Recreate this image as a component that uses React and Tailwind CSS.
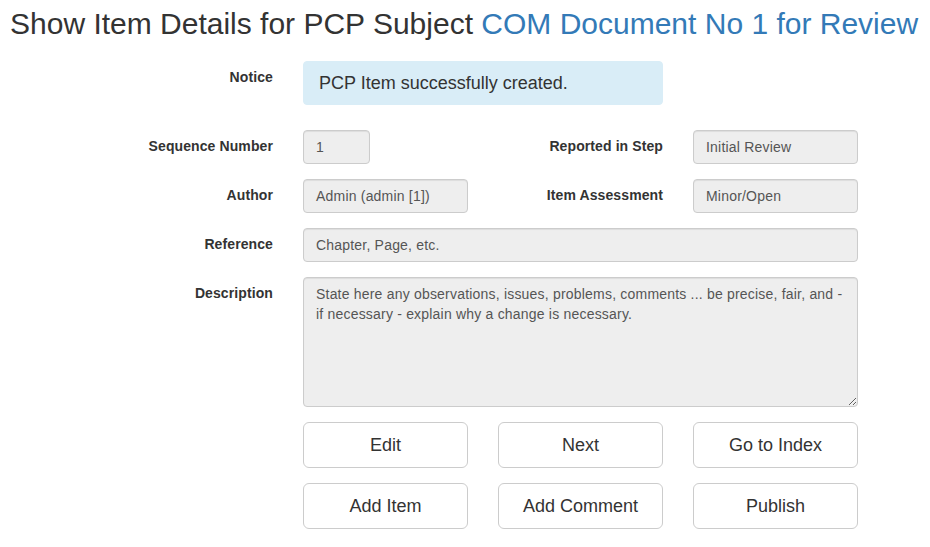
import React from "react";

const font = { fontFamily: '"Liberation Sans", Arial, sans-serif' };

const inputCls =
  "h-[34px] bg-[#eeeeee] border border-[#cccccc] rounded-[4px] px-[12px] text-[14px] leading-[32px] tracking-[0.2px] text-[#555555] shadow-[inset_0_1px_1px_rgba(0,0,0,0.075)] whitespace-nowrap overflow-hidden";

const labelCls = "text-right font-bold text-[14px] leading-[20px] tracking-[0.1px] pt-[6px] text-[#333333]";

const btnCls =
  "h-[46px] bg-white border border-[#cccccc] rounded-[6px] text-[18px] leading-[24px] text-[#333333] flex items-center justify-center";

const Row = ({ label, children, className = "" }) => (
  <div className={"flex " + className}>
    <div className={"w-[273px] shrink-0 " + labelCls}>{label}</div>
    <div className="ml-[30px] w-[555px]">{children}</div>
  </div>
);

const App = () => {
  return (
    <div className="min-h-screen bg-white text-[#333333]" style={font}>
      <h1 className="pt-[7px] pl-[10px] text-[30px] leading-[33px] font-normal whitespace-nowrap">
        Show Item Details for PCP Subject{" "}
        <a className="text-[#337ab7]">COM Document No 1 for Review</a>
      </h1>

      <div className="mt-[21px] flex flex-col">
        {/* Notice */}
        <Row label="Notice">
          <div className="w-[360px] bg-[#d9edf7] border border-[#d9edf7] rounded-[4px] pl-[15px] py-[9px] text-[18px] leading-[24px] text-[#333333]">
            PCP Item successfully created.
          </div>
        </Row>

        {/* Sequence / Reported in Step */}
        <Row label="Sequence Number" className="mt-[25px]">
          <div className="grid grid-cols-3 gap-x-[30px]">
            <div className={inputCls + " w-[67px]"}>1</div>
            <div className={labelCls}>Reported in Step</div>
            <div className={inputCls}>Initial Review</div>
          </div>
        </Row>

        {/* Author / Item Assessment */}
        <Row label="Author" className="mt-[15px]">
          <div className="grid grid-cols-3 gap-x-[30px]">
            <div className={inputCls}>Admin (admin [1])</div>
            <div className={labelCls}>Item Assessment</div>
            <div className={inputCls}>Minor/Open</div>
          </div>
        </Row>

        {/* Reference */}
        <Row label="Reference" className="mt-[15px]">
          <div className={inputCls}>Chapter, Page, etc.</div>
        </Row>

        {/* Description */}
        <Row label="Description" className="mt-[15px]">
          <textarea
            readOnly
            className="block w-full h-[130px] bg-[#eeeeee] border border-[#cccccc] rounded-[4px] px-[12px] py-[6px] text-[14px] leading-[20px] tracking-[0.2px] text-[#555555] shadow-[inset_0_1px_1px_rgba(0,0,0,0.075)] outline-none"
            style={font}
            defaultValue="State here any observations, issues, problems, comments ... be precise, fair, and - if necessary - explain why a change is necessary."
          />
        </Row>

        {/* Buttons */}
        <Row label="" className="mt-[15px]">
          <div className="grid grid-cols-3 gap-x-[30px] gap-y-[15px]">
            <button className={btnCls}>Edit</button>
            <button className={btnCls}>Next</button>
            <button className={btnCls}>Go to Index</button>
            <button className={btnCls}>Add Item</button>
            <button className={btnCls}>Add Comment</button>
            <button className={btnCls}>Publish</button>
          </div>
        </Row>
      </div>
    </div>
  );
};

export default App;
